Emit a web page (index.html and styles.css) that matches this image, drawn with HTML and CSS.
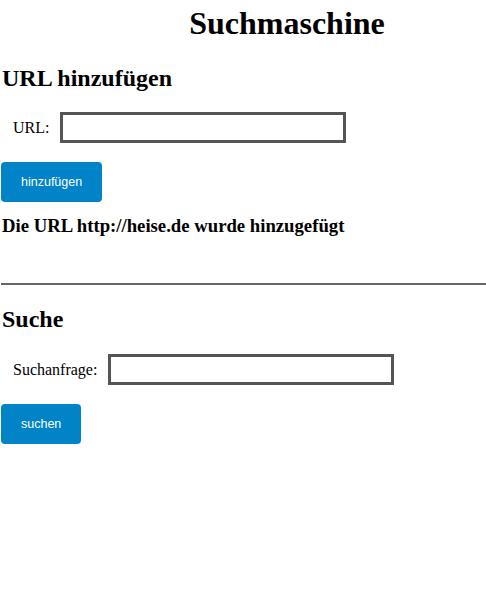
FILE: index.html
```html
<!DOCTYPE html>
<html lang="de">
<head>
<meta charset="utf-8">
<title>Suchmaschine</title>
<link rel="stylesheet" href="styles.css">
</head>
<body>
<h1 class="title">Suchmaschine</h1>
<section class="block">
  <h2 class="heading">URL hinzufügen</h2>
  <div class="field">
    <label class="label" for="url">URL:</label>
    <input class="input" id="url" type="text" autofocus>
  </div>
  <button class="btn">hinzufügen</button>
  <p class="message">Die URL http://heise.de wurde hinzugefügt</p>
</section>
<hr class="divider">
<section class="block">
  <h2 class="heading">Suche</h2>
  <div class="field">
    <label class="label" for="q">Suchanfrage:</label>
    <input class="input" id="q" type="text">
  </div>
  <button class="btn">suchen</button>
</section>
</body>
</html>
```
FILE: styles.css
```css
html, body {
  margin: 0;
  padding: 0;
  background: #fff;
}
body {
  font-family: "Liberation Serif", "Times New Roman", serif;
  color: #000;
  padding: 0 0 0 1px;
}
.title {
  font-size: 32px;
  font-weight: bold;
  text-align: center;
  margin: 5px 0 0 0;
  padding-left: 87px;
  line-height: 37px;
}
.heading {
  font-size: 24px;
  font-weight: bold;
  margin: 22px 0 0 1px;
  line-height: 28px;
}
.field {
  display: flex;
  align-items: center;
  gap: 11px;
  margin: 20px 0 0 12px;
}
.label {
  font-size: 16px;
}
.input {
  width: 286px;
  height: 31px;
  box-sizing: border-box;
  border: 3px solid #555;
  padding: 0 10px;
  font-size: 16px;
  outline: none;
  margin: 0;
}
.btn {
  display: block;
  margin: 19px 0 0 0;
  height: 40px;
  padding: 0 20px;
  background: #0084c7;
  color: #fff;
  border: none;
  border-radius: 4px;
  font-family: "Liberation Sans", Arial, sans-serif;
  font-size: 12.5px;
}
.message {
  font-size: 18.72px;
  font-weight: bold;
  margin: 13px 0 0 1px;
}
.divider {
  border: none;
  border-top: 2px solid #666;
  margin: 46px 0 0 0;
}
.block + .divider + .block .heading {
  margin-top: 20px;
}
.block + .divider + .block .field {
  margin-top: 21px;
}
```
